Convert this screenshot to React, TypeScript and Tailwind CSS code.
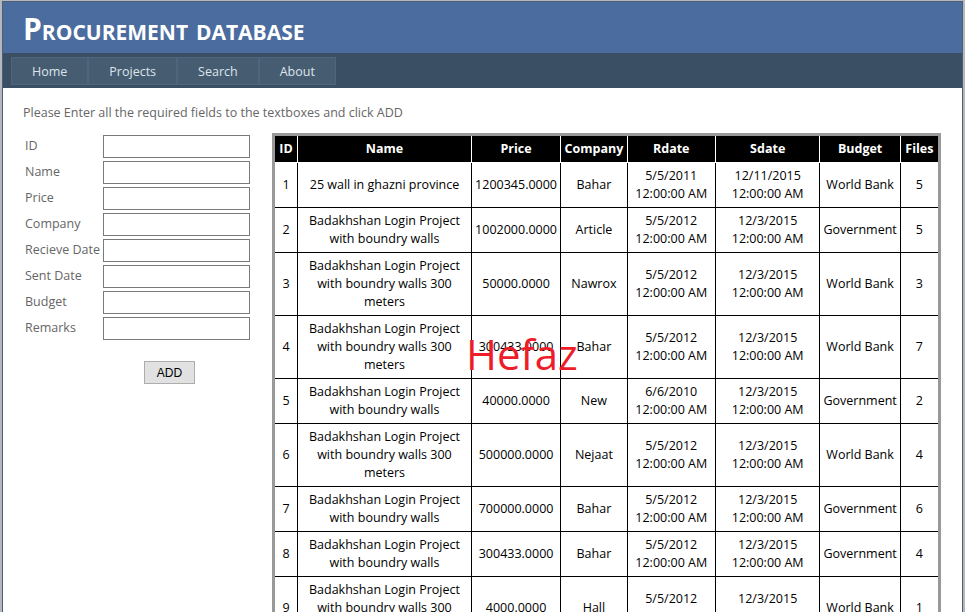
const rows = [
  { id: 1, name: '25 wall in ghazni province', price: '1200345.0000', company: 'Bahar', rdate: '5/5/2011', sdate: '12/11/2015', budget: 'World Bank', files: 5 },
  { id: 2, name: 'Badakhshan Login Project with boundry walls', price: '1002000.0000', company: 'Article', rdate: '5/5/2012', sdate: '12/3/2015', budget: 'Government', files: 5 },
  { id: 3, name: 'Badakhshan Login Project with boundry walls 300 meters', price: '50000.0000', company: 'Nawrox', rdate: '5/5/2012', sdate: '12/3/2015', budget: 'World Bank', files: 3 },
  { id: 4, name: 'Badakhshan Login Project with boundry walls 300 meters', price: '300433.0000', company: 'Bahar', rdate: '5/5/2012', sdate: '12/3/2015', budget: 'World Bank', files: 7 },
  { id: 5, name: 'Badakhshan Login Project with boundry walls', price: '40000.0000', company: 'New', rdate: '6/6/2010', sdate: '12/3/2015', budget: 'Government', files: 2 },
  { id: 6, name: 'Badakhshan Login Project with boundry walls 300 meters', price: '500000.0000', company: 'Nejaat', rdate: '5/5/2012', sdate: '12/3/2015', budget: 'World Bank', files: 4 },
  { id: 7, name: 'Badakhshan Login Project with boundry walls', price: '700000.0000', company: 'Bahar', rdate: '5/5/2012', sdate: '12/3/2015', budget: 'Government', files: 6 },
  { id: 8, name: 'Badakhshan Login Project with boundry walls', price: '300433.0000', company: 'Bahar', rdate: '5/5/2012', sdate: '12/3/2015', budget: 'Government', files: 4 },
  { id: 9, name: 'Badakhshan Login Project with boundry walls 300 meters', price: '4000.0000', company: 'Hall', rdate: '5/5/2012', sdate: '12/3/2015', budget: 'World Bank', files: 1 },
];

const fields = ['ID', 'Name', 'Price', 'Company', 'Recieve Date', 'Sent Date', 'Budget', 'Remarks'];
const menu = ['Home', 'Projects', 'Search', 'About'];
const headers = ['ID', 'Name', 'Price', 'Company', 'Rdate', 'Sdate', 'Budget', 'Files'];

export default function App() {
  return (
    <div className="h-[612px] overflow-hidden bg-[#b6b7bc] pt-px font-['Open_Sans',sans-serif] text-[12.5px]">
      <div className="ml-[2px] w-[961px] border border-[#496077] bg-white">
        <div className="flex h-[51px] items-center bg-[#4b6c9e] pl-5">
          <h1 className="mt-[2px] text-[30px] font-bold leading-none text-white [font-variant-caps:small-caps]">Procurement database</h1>
        </div>

        <div className="flex bg-[#3a4f63] pt-1 pb-[3px] pl-2">
          {menu.map((m) => (
            <a key={m} className="block border border-[#4e667d] bg-[#465c71] px-5 pt-[5px] pb-[3px] leading-[18px] text-[#dde4ec]">
              {m}
            </a>
          ))}
        </div>

        <div className="relative px-5 pt-[16px]">
          <p className="leading-[18px] text-[#666]">Please Enter all the required fields to the textboxes and click ADD</p>

          <div className="mt-[11px] flex">
            <div className="w-[249px] shrink-0 pt-[2px] pl-[2px]">
              <div className="flex flex-col gap-[3px]">
                {fields.map((f) => (
                  <div key={f} className="flex items-center">
                    <label className="w-[78px] shrink-0 whitespace-nowrap text-[#666]">{f}</label>
                    <input className="h-[23px] w-[147px] border border-[#7a7a7a] bg-white" />
                  </div>
                ))}
              </div>
              <button className="mt-[21px] ml-[119px] h-[23px] w-[51px] border border-[#adadad] bg-[#e1e1e1] font-['Liberation_Sans',sans-serif] text-[12px] text-black">
                ADD
              </button>
            </div>

            <table className="w-[669px] table-fixed border-collapse border-[3px] border-[#999] text-center leading-[18px] text-black">
              <colgroup>
                <col className="w-[24px]" />
                <col className="w-[173px]" />
                <col className="w-[89px]" />
                <col className="w-[66px]" />
                <col className="w-[88px]" />
                <col className="w-[104px]" />
                <col className="w-[80px]" />
                <col className="w-[39px]" />
              </colgroup>
              <thead>
                <tr className="bg-black text-white">
                  {headers.map((h) => (
                    <th key={h} className="border border-white px-0 py-1 font-bold">
                      {h}
                    </th>
                  ))}
                </tr>
              </thead>
              <tbody>
                {rows.map((r) => (
                  <tr key={r.id}>
                    <td className="border border-black py-1">{r.id}</td>
                    <td className="border border-black px-[6px] py-1">{r.name}</td>
                    <td className="border border-black py-1">{r.price}</td>
                    <td className="border border-black py-1">{r.company}</td>
                    <td className="border border-black py-1">
                      {r.rdate}
                      <br />
                      12:00:00 AM
                    </td>
                    <td className="border border-black py-1">
                      {r.sdate}
                      <br />
                      12:00:00 AM
                    </td>
                    <td className="border border-black py-1">{r.budget}</td>
                    <td className="border border-black py-1">{r.files}</td>
                  </tr>
                ))}
              </tbody>
            </table>
          </div>

          <span className="absolute top-[245px] left-[463px] text-[42px] leading-none text-[#ee1d2a]">Hefaz</span>
        </div>
      </div>
    </div>
  );
}
